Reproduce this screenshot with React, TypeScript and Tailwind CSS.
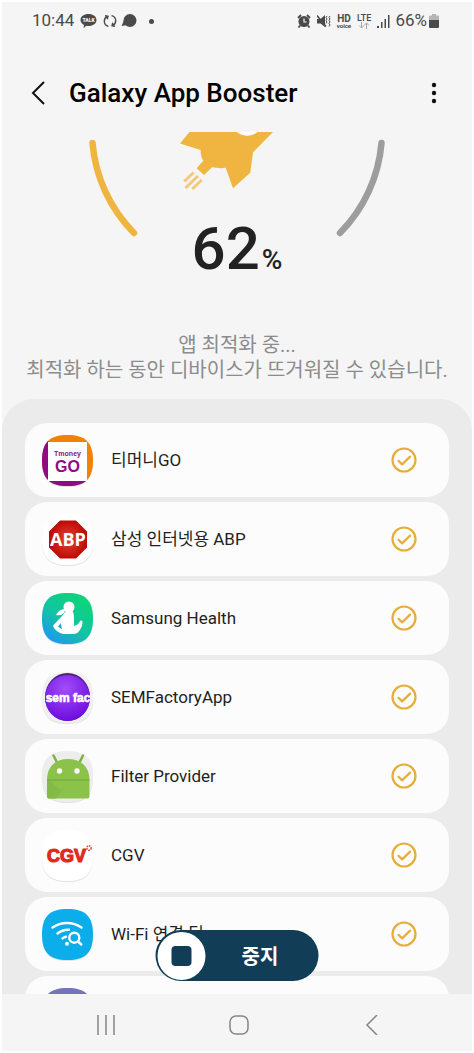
import type { ReactNode } from "react";

const SQUIRCLE =
  "M25.5 0C43.5 0 51 7.5 51 25.5S43.5 51 25.5 51 0 43.5 0 25.5 7.5 0 25.5 0Z";

interface AppIconProps {
  fill: string;
  children?: ReactNode;
}

function AppIcon({ fill, children }: AppIconProps) {
  return (
    <svg
      viewBox="0 0 51 51"
      className="size-[51px] shrink-0 overflow-visible"
      aria-hidden="true"
    >
      <path d={SQUIRCLE} fill="#e2e2e4" transform="translate(0 1)" />
      <path d={SQUIRCLE} fill={fill} />
      {children}
    </svg>
  );
}

function TmoneyIcon() {
  return (
    <AppIcon fill="#f08306">
      <clipPath id="tmoney-clip">
        <path d={SQUIRCLE} />
      </clipPath>
      <path d="M0 0L51 51H0Z" fill="#8f0b86" clipPath="url(#tmoney-clip)" />
      <path d="M6 7h39v39H6z" fill="#fff" />
      <text x="25.5" y="21" textAnchor="middle" fontSize="7" fontWeight="700" fill="#8f0b86" className="font-['Liberation_Sans',sans-serif]">
        Tmoney
      </text>
      <text x="25.5" y="37" textAnchor="middle" fontSize="16" fontWeight="700" fill="#8f0b86" className="font-['Liberation_Sans',sans-serif]">
        GO
      </text>
    </AppIcon>
  );
}

function AbpIcon() {
  return (
    <AppIcon fill="#fff">
      <radialGradient id="abp-red">
        <stop offset="0" stopColor="#e8452f" />
        <stop offset="1" stopColor="#bd0a08" />
      </radialGradient>
      <path d="M18 6.5h16l11 11v16l-11 11H18l-11-11v-16Z" fill="url(#abp-red)" />
      <text x="26" y="32" textAnchor="middle" fontSize="18" fontWeight="700" fill="#fff" className="font-['Open_Sans',sans-serif]">
        ABP
      </text>
    </AppIcon>
  );
}

function HealthIcon() {
  return (
    <AppIcon fill="url(#health-bg)">
      <linearGradient id="health-bg" x1="0.8" y1="0.15" x2="0.2" y2="1">
        <stop offset="0" stopColor="#0bd47c" />
        <stop offset="0.5" stopColor="#12c4a4" />
        <stop offset="1" stopColor="#1e96f5" />
      </linearGradient>
      <circle cx="27" cy="14" r="5.5" fill="#fff" />
      <path d="M23 16c-4 0-7 2-9 6 4 1 7 0 9-4Z" fill="#fff" />
      <path
        d="M24 18h6.500c1.500 3 1.500 5 1.500 8v7c3-.5 5-2.500 6-5 1-1 2.500-.5 2.500 1 0 3-1 6-3 8.500-1.500 2.500-3.500 3.500-6.500 3.500H21c-4-1-7-3-9-6-1-1.500-1-2.500 0-3.500l8.500-9c1-1.500 2-3 3.500-4.500Z"
        fill="#fff"
      />
      <path d="M16 33.500l3-3.500c.2 2.500.5 4.500 1 6.500Z" fill="#17a9d4" />
    </AppIcon>
  );
}

function SemFactoryIcon() {
  return (
    <AppIcon fill="#f0f0f1">
      <radialGradient id="sem-bg" cx="0.45" cy="0.3" r="0.75">
        <stop offset="0" stopColor="#a24dfb" />
        <stop offset="1" stopColor="#6a08dd" />
      </radialGradient>
      <clipPath id="sem-clip">
        <ellipse cx="25.5" cy="25" rx="22.5" ry="24" />
      </clipPath>
      <ellipse cx="25.5" cy="25" rx="22.5" ry="24" fill="#4b2280" />
      <ellipse cx="25.5" cy="26" rx="22.5" ry="23" fill="url(#sem-bg)" />
      <g clipPath="url(#sem-clip)">
        <text
          x="26"
          y="30"
          textAnchor="middle"
          fontSize="12"
          fontWeight="700"
          fill="#fff"
          stroke="#fff"
          strokeWidth="0.6"
          className="font-['Liberation_Sans',sans-serif]"
        >
          sem fac
        </text>
      </g>
    </AppIcon>
  );
}

function AndroidIcon() {
  return (
    <AppIcon fill="#ededee">
      <g stroke="#7cb342" strokeWidth="2.5" strokeLinecap="round">
        <path d="M11.500 4.500L15 11.500M41 4.500L37.500 11.500" />
      </g>
      <path d="M5 29C5 16 13 8 26 8s21.500 8 21.500 21Z" fill="#8bc34a" />
      <path d="M5 29h42.500v16.500a2 2 0 0 1-2 2H7a2 2 0 0 1-2-2Z" fill="#8bc34a" />
      <path d="M5 29h2l11 10 4-2-8 10.500H7a2 2 0 0 1-2-2Z" fill="#84ba48" />
      <path d="M5 29h42.500" stroke="#72a53c" strokeWidth="1" />
      <circle cx="17.5" cy="20" r="2.7" fill="#fff" />
      <circle cx="35" cy="20" r="2.7" fill="#fff" />
    </AppIcon>
  );
}

function CgvIcon() {
  return (
    <AppIcon fill="#fff">
      <text
        x="24.5"
        y="32"
        textAnchor="middle"
        fontSize="18"
        fontWeight="700"
        fill="#e02a1d"
        stroke="#e02a1d"
        strokeWidth="1.2"
        strokeLinejoin="round"
        className="font-['Liberation_Sans',sans-serif]"
      >
        CGV
      </text>
      <circle cx="47" cy="18" r="2.2" fill="none" stroke="#d9583f" strokeWidth="1.5" strokeDasharray="1.6 0.7" />
    </AppIcon>
  );
}

function WifiTipsIcon() {
  return (
    <AppIcon fill="#0badea">
      <g fill="none" stroke="#fff" strokeWidth="2.4" strokeLinecap="round">
        <path d="M10.500 18.500C19 12.500 31 12.500 39.500 18.500" />
        <path d="M15.500 24.500C19 21.500 23 20.500 27 20.700" />
        <path d="M20.500 29.500C21.500 28.500 22.500 28 24 27.800" />
        <circle cx="32.3" cy="28.7" r="5" />
        <path d="M36 32.500l3.300 3" />
      </g>
      <circle cx="25" cy="34.7" r="2" fill="#fff" />
    </AppIcon>
  );
}

const apps = [
  { name: "티머니GO", icon: <TmoneyIcon /> },
  { name: "삼성 인터넷용 ABP", icon: <AbpIcon /> },
  { name: "Samsung Health", icon: <HealthIcon /> },
  { name: "SEMFactoryApp", icon: <SemFactoryIcon /> },
  { name: "Filter Provider", icon: <AndroidIcon /> },
  { name: "CGV", icon: <CgvIcon /> },
  { name: "Wi-Fi 연결 팁", icon: <WifiTipsIcon /> },
  { name: "", icon: <AppIcon fill="#7474bb" /> },
];

function CheckIcon() {
  return (
    <svg viewBox="0 0 26 26" className="size-[26px] shrink-0" fill="none" stroke="#e6ad3c" aria-hidden="true">
      <circle cx="13" cy="13" r="11.5" strokeWidth="2.2" />
      <path d="M7.500 13.800l3.600 3.600 8-7.800" strokeWidth="2.2" strokeLinecap="round" strokeLinejoin="round" />
    </svg>
  );
}

function StatusBar() {
  return (
    <div className="flex h-9 shrink-0 items-center justify-between pt-0.5 pr-[33px] pl-[30px] text-[17px] text-[#4a4a4a]">
      <div className="flex items-center">
        <span>10:44</span>
        <svg viewBox="0 0 17 16" className="ml-1.5 h-4 w-[17px]" aria-hidden="true">
          <path d="M8.500 1C13 1 16.500 3.500 16.500 7S13 13 8.500 13c-.8 0-1.500 0-2.200-.2L3.500 15.300 4 12C2 11 .5 9.200.5 7 .5 3.500 4 1 8.500 1Z" fill="#4a4a4a" />
          <text x="8.5" y="9" textAnchor="middle" fontSize="5" fontWeight="900" fill="#f5f5f5">
            TALK
          </text>
        </svg>
        <svg viewBox="0 0 14 16" className="ml-1.5 h-4 w-3.5" fill="none" stroke="#4a4a4a" strokeWidth="1.4" aria-hidden="true">
          <path d="M5.500 13.400C3 12.800 1.300 10.800 1.300 8.300c0-2.200 1.200-4 3-4.800M8.500 2.600c2.500.6 4.200 2.600 4.200 5.100 0 2.200-1.200 4-3 4.800" />
          <path d="M2 2.800l3 .5-.8 2.900M12 13.200l-3-.5.8-2.900" />
        </svg>
        <svg viewBox="0 0 16 16" className="ml-1 size-4" fill="#4a4a4a" aria-hidden="true">
          <circle cx="9" cy="7.5" r="6.5" />
          <path d="M4 5L.5 13l6-1Z" />
        </svg>
        <span className="ml-3 size-[5px] rounded-full bg-[#4a4a4a]" />
      </div>
      <div className="flex items-center">
        <svg viewBox="0 0 14 14" className="size-3.5" aria-hidden="true">
          <circle cx="7" cy="7.5" r="5.5" fill="#4a4a4a" />
          <path d="M1 4l3-3M13 4l-3-3M3 11.500l-1.500 2M11 11.500l1.500 2" stroke="#4a4a4a" strokeWidth="1.8" />
          <path d="M7 4.500v3.500h2.500" fill="none" stroke="#f5f5f5" strokeWidth="1.2" />
        </svg>
        <svg viewBox="0 0 14 14" className="ml-1.5 size-3.5" aria-hidden="true">
          <path d="M0 5h3.500L8 1v12L3.500 9.500H0Z" fill="#4a4a4a" />
          <path d="M0 1.500l9 11" stroke="#4a4a4a" strokeWidth="1.5" />
          <path d="M10 2l-1 1.500 1 1.500-1 1.500 1 1.500-1 1.500M13 2l-1 1.500 1 1.500-1 1.500 1 1.500-1 1.500 1 1.500-1 1.500" fill="none" stroke="#4a4a4a" strokeWidth="1" />
        </svg>
        <span className="ml-1.5 flex flex-col items-center font-bold">
          <span className="text-[10px] leading-[8px]">HD</span>
          <span className="text-[6px] leading-[5px]">voice</span>
        </span>
        <span className="ml-1.5 flex flex-col items-center font-medium">
          <span className="text-[9px] leading-[8px]">LTE</span>
          <svg viewBox="0 0 12 7" className="h-[7px] w-3" fill="none" stroke="#a5a5a5" aria-hidden="true">
            <path d="M3.500 0v6M1 3.500L3.500 6 6 3.500M8.500 7V1M6 3.500L8.500 1 11 3.500" />
          </svg>
        </span>
        <svg viewBox="0 0 13 14" className="ml-1.5 h-3.5 w-[13px]" fill="#4a4a4a" aria-hidden="true">
          <path d="M0 12h2v2H0zM4 8h1.500v6H4zM7.500 5H9v9H7.500zM11 1h1.500v13H11z" />
        </svg>
        <span className="ml-[5px]">66%</span>
        <svg viewBox="0 0 10 14" className="ml-0.5 h-3.5 w-2.5" aria-hidden="true">
          <path d="M3 0h4v1.500h2a1 1 0 0 1 1 1V6H0V2.500a1 1 0 0 1 1-1h2Z" fill="#b5b5b5" />
          <path d="M0 6h10v7a1 1 0 0 1-1 1H1a1 1 0 0 1-1-1Z" fill="#4a4a4a" />
        </svg>
      </div>
    </div>
  );
}

function Progress() {
  return (
    <section className="shrink-0 pb-4 text-center">
      <svg viewBox="0 0 300 110" className="mx-auto h-[110px] w-[300px]" fill="none" aria-hidden="true">
        <path d="M5.500 12A145.600 145.600 0 0 0 47 102" stroke="#efb540" strokeWidth="6.5" strokeLinecap="round" />
        <path d="M294.500 12A145.600 145.600 0 0 1 253 102" stroke="#9d9d9d" strokeWidth="6.5" strokeLinecap="round" />
        <path
          d="M102.500 1L93 12.500l20.700 6.500c-.2 4 .6 7.500 2.600 10.700l-6.600 7.600 7.300 6.700 8.300-8c4 1.200 9 1.500 13.400.7l7.300 20.600 17.300-15.600 2.700-20.400L186 1Z"
          fill="#efb540"
        />
        <path d="M150 1c6 5 14.500 5 20.500 0Z" fill="#fff" />
        <path d="M106.700 41.500l-9.500 9M111 45L98.500 57M114.700 49l-9.500 9" stroke="#f2c97a" strokeWidth="3" />
      </svg>
      <p className="-mt-[22px] text-[60px] leading-[60px] font-medium text-[#222]">
        62<span className="ml-0.5 text-[28px] leading-none">%</span>
      </p>
      <p className="mt-[54px] text-[20px] leading-[25px] text-[#8c8c8c]">
        앱 최적화 중...
        <br />
        <span className="whitespace-nowrap">최적화 하는 동안 디바이스가 뜨거워질 수 있습니다.</span>
      </p>
    </section>
  );
}

export default function App() {
  return (
    <div className="h-screen bg-white p-0.5 font-[Roboto,'Noto_Sans_CJK_KR',sans-serif]">
      <div className="flex h-full flex-col bg-[#f5f5f5]">
        <StatusBar />

        {/* Header */}
        <header className="mt-4 flex h-[77px] shrink-0 items-center pr-7 pl-7">
          <button type="button" aria-label="Back" className="shrink-0">
            <svg viewBox="0 0 16 24" className="h-6 w-4" fill="none" stroke="#111" strokeWidth="2">
              <path d="M14 1L3 12l11 11" />
            </svg>
          </button>
          <h1 className="ml-[23px] flex-1 pt-0.5 text-[26px] font-medium text-black">Galaxy App Booster</h1>
          <button type="button" aria-label="More options" className="shrink-0">
            <svg viewBox="0 0 20 22" className="h-[22px] w-5" fill="#111">
              <circle cx="10" cy="3" r="2.2" />
              <circle cx="10" cy="11" r="2.2" />
              <circle cx="10" cy="19" r="2.2" />
            </svg>
          </button>
        </header>

        <Progress />

        {/* App list */}
        <main className="relative min-h-0 flex-1 overflow-hidden rounded-t-[32px] bg-[#ebebeb] px-[23px] pt-6">
          <ul className="flex flex-col gap-[5px]">
            {apps.map((app) => (
              <li
                key={app.name}
                className="flex h-[74px] shrink-0 items-center rounded-[22px] bg-[#fcfcfc] pr-8 pl-[17px]"
              >
                {app.icon}
                <span className="ml-[18px] flex-1 pt-0.5 text-[17px] text-[#1f1f1f]">{app.name}</span>
                <CheckIcon />
              </li>
            ))}
          </ul>

          <button
            type="button"
            className="absolute bottom-[13px] left-1/2 flex h-[51px] w-[163px] -translate-x-1/2 items-center rounded-full bg-[#123d57] pr-1 pl-0.5 text-white"
          >
            <span className="flex size-12 items-center justify-center rounded-full bg-white">
              <span className="size-5 rounded bg-[#123d57]" />
            </span>
            <span className="flex-1 pt-0.5 text-center text-[20px] font-bold">중지</span>
          </button>
        </main>

        {/* Navigation bar */}
        <nav className="grid h-[57px] shrink-0 grid-cols-3 justify-items-center pt-1 pr-[34px] pl-[38px]">
          <button type="button" aria-label="Recent apps">
            <svg viewBox="0 0 20 20" className="size-5" stroke="#858585" strokeWidth="1.5">
              <path d="M2 0v20M10 0v20M18 0v20" />
            </svg>
          </button>
          <button type="button" aria-label="Home">
            <svg viewBox="0 0 20 20" className="size-5" fill="none" stroke="#858585" strokeWidth="1.5">
              <rect x="1" y="1" width="18" height="18" rx="6" />
            </svg>
          </button>
          <button type="button" aria-label="Back">
            <svg viewBox="0 0 20 20" className="size-5" fill="none" stroke="#858585" strokeWidth="1.5">
              <path d="M15 0L5 10l10 10" />
            </svg>
          </button>
        </nav>
      </div>
    </div>
  );
}
